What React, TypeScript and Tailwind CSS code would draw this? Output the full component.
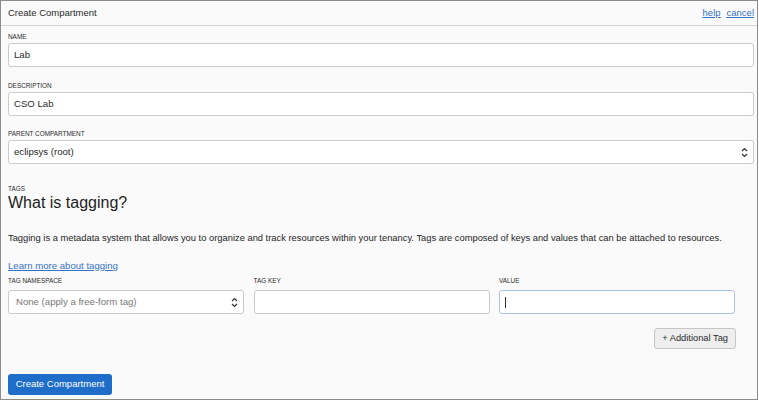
import React from "react";

function Chevrons() {
  return (
    <svg width="7" height="11" viewBox="0 0 7 11" fill="none" stroke="#333" strokeWidth="1.2">
      <path d="M1 4 L3.5 1.5 L6 4" />
      <path d="M1 7 L3.5 9.5 L6 7" />
    </svg>
  );
}

function Label({ children }: { children: React.ReactNode }) {
  return <div className="h-[8px] text-[6.4px] leading-[8px] text-[#2a2a2a] uppercase">{children}</div>;
}

export default function App() {
  return (
    <div className="w-[758px] h-[400px] border border-[#8c8c8c] bg-[#fafafa] text-[#2a2a2a] font-['Liberation_Sans',Arial,sans-serif] overflow-hidden">
      <div className="h-[25px] border-b border-[#d4d4d4] flex items-center justify-between pl-[7px] pr-[3px]">
        <span className="text-[9.5px]">Create Compartment</span>
        <div className="flex gap-[6px] text-[9.5px] text-[#3572c6] underline">
          <a href="#">help</a>
          <a href="#">cancel</a>
        </div>
      </div>

      <div className="flex flex-col pl-[7px] pr-[3px]">
        <div className="mt-[7px]">
          <Label>Name</Label>
          <div className="mt-[2px] h-[24px] bg-white border border-[#cacaca] rounded-[3px] flex items-center pl-[5px] text-[9.6px]">Lab</div>
        </div>

        <div className="mt-[15px]">
          <Label>Description</Label>
          <div className="mt-[2px] h-[24px] bg-white border border-[#cacaca] rounded-[3px] flex items-center pl-[5px] text-[9.6px]">CSO Lab</div>
        </div>

        <div className="mt-[14px]">
          <Label>Parent Compartment</Label>
          <div className="mt-[2px] h-[24px] bg-white border border-[#cacaca] rounded-[3px] flex items-center justify-between pl-[5px] pr-[5px] text-[9.6px]">
            <span>eclipsys (root)</span>
            <Chevrons />
          </div>
        </div>

        <div className="mt-[21px]">
          <Label>Tags</Label>
          <h2 className="text-[16px] leading-[20px] text-[#1e1e1e]">What is tagging?</h2>
          <p className="mt-[19px] text-[9.35px] leading-[12px] text-[#1e1e1e]">
            Tagging is a metadata system that allows you to organize and track resources within your tenancy. Tags are composed of keys and values that can be attached to resources.
          </p>
          <a href="#" className="block mt-[16px] text-[9.6px] leading-[12px] text-[#3572c6] underline">Learn more about tagging</a>
        </div>

        <div className="mt-[5px] w-[728px] flex flex-col">
          <div className="grid grid-cols-[236px_236px_236px] gap-x-[9.5px]">
            <Label>Tag Namespace</Label>
            <Label>Tag Key</Label>
            <Label>Value</Label>
            <div className="mt-[5px] h-[24px] bg-white border border-[#cacaca] rounded-[3px] flex items-center justify-between pl-[7px] pr-[5px] text-[9.6px] text-[#777]">
              <span>None (apply a free-form tag)</span>
              <Chevrons />
            </div>
            <div className="mt-[5px] h-[24px] bg-white border border-[#cacaca] rounded-[3px]" />
            <div className="mt-[5px] h-[24px] bg-white border border-[#a9c3e6] rounded-[3px] flex items-center pl-[5px]">
              <span className="w-[1px] h-[11px] bg-[#333]" />
            </div>
          </div>
          <button className="self-end mt-[14px] h-[21px] px-[7px] bg-[#eeeeee] border border-[#c6c6c6] rounded-[3px] text-[9.3px] text-[#2a2a2a]">
            + Additional Tag
          </button>
        </div>

        <div className="mt-[25px] flex">
          <button className="h-[21px] w-[104px] bg-[#1e6dc8] rounded-[3px] text-white text-[9.5px]">
            Create Compartment
          </button>
        </div>
      </div>
    </div>
  );
}
